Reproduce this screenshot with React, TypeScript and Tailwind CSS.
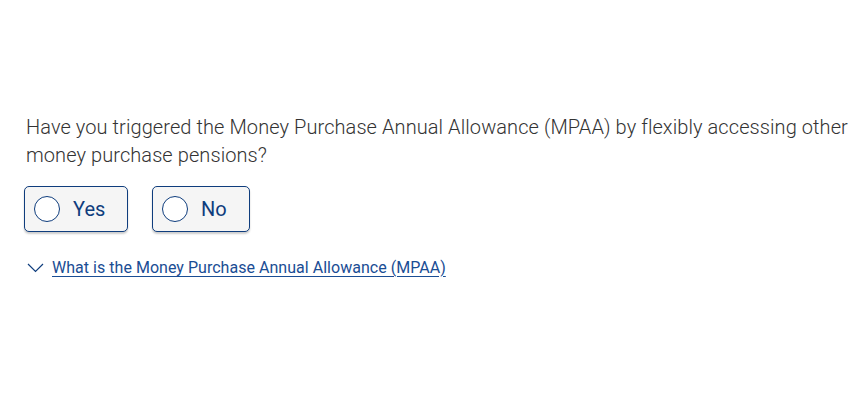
import React, { useState } from 'react';

const options = ['Yes', 'No'];

const App: React.FC = () => {
  const [selected, setSelected] = useState<string | null>(null);
  const [open, setOpen] = useState(false);
  return <div className="w-full min-h-[400px] bg-white pl-[26px] pr-4 pt-[113px]" style={{
    fontFamily: 'Roboto, sans-serif'
  }}>
      <p className="text-[20px] leading-[28px] font-light text-[#333333] tracking-[0.08px]">
        Have you triggered the Money Purchase Annual Allowance (MPAA) by flexibly accessing other money purchase pensions?
      </p>
      <div className="flex gap-[24px] mt-[17px] -ml-[2px]">
        {options.map(opt => <button key={opt} onClick={() => setSelected(opt)} className={`h-[46px] flex items-center pl-[9px] rounded-[5px] border-[1.5px] border-[#0f3d7d] bg-[#f5f5f5] shadow-[0_2px_2px_rgba(0,0,0,0.2)] ${opt === 'Yes' ? 'w-[104px]' : 'w-[98px]'}`}>
            <span className="w-[26px] h-[26px] rounded-full border-[1.5px] border-[#0f3d7d] bg-white flex items-center justify-center">
              {selected === opt && <span className="w-[14px] h-[14px] rounded-full bg-[#0f3d7d]" />}
            </span>
            <span className="ml-[13px] text-[20px] text-[#0f3d7d]">{opt}</span>
          </button>)}
      </div>
      <button onClick={() => setOpen(!open)} className="flex items-center mt-[26px]">
        <svg width="17" height="10" viewBox="0 0 17 10" fill="none" className={`ml-[1px] ${open ? 'rotate-180' : ''}`}>
          <path d="M1 1l7.5 7.5L16 1" stroke="#0f3d7d" strokeWidth="1.2" />
        </svg>
        <span className="ml-[8px] text-[16px] leading-[20px] underline underline-offset-[3px] text-[#1a4d94] tracking-[0.03px]">
          What is the Money Purchase Annual Allowance (MPAA)
        </span>
      </button>
    </div>;
};

export default App;
